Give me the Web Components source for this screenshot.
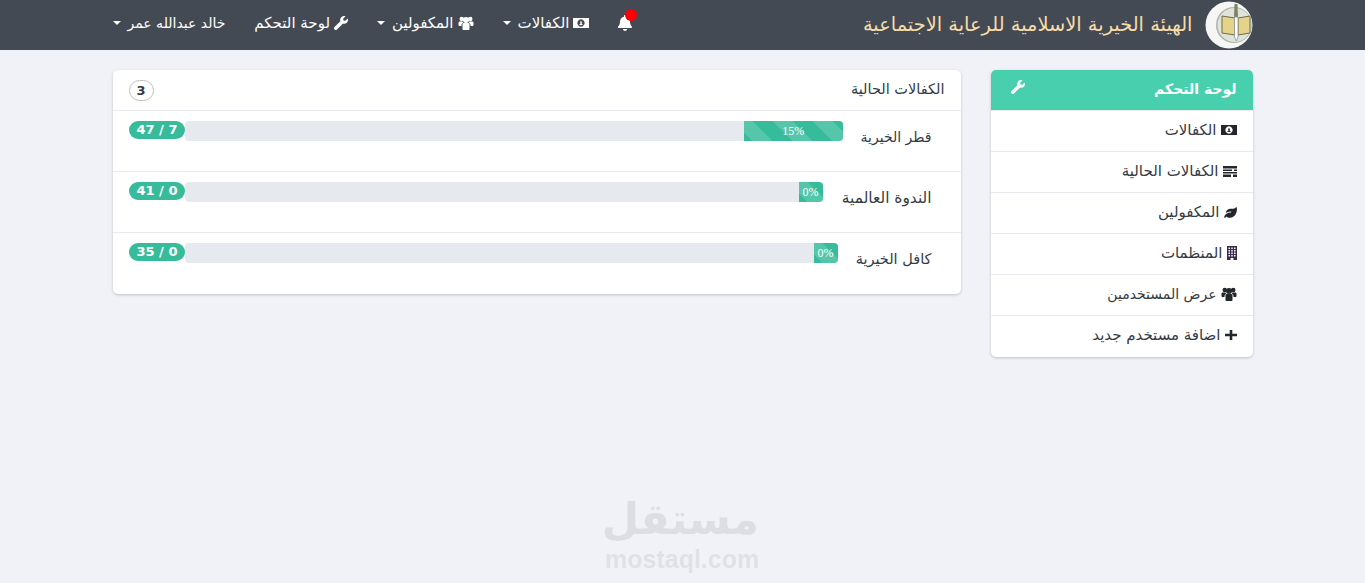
<!DOCTYPE html>
<html lang="ar" dir="rtl">
<head>
<meta charset="utf-8">
<title>لوحة التحكم</title>
<style>
  html, body { margin: 0; height: 100%; }
  body {
    background: #f0f2f7;
    color: #333b45;
    font: 15px/1.5 "DejaVu Sans", "Noto Sans", sans-serif;
    overflow: hidden;
  }
</style>
</head>
<body>
<app-navbar>
  <nav-link icon="bell" badge slot="links"></nav-link>
  <nav-link icon="money" caret slot="links">الكفالات</nav-link>
  <nav-link icon="users" caret slot="links">المكفولين</nav-link>
  <nav-link icon="wrench" slot="links">لوحة التحكم</nav-link>
  <nav-link caret slot="links" style="font-size:14px">خالد عبدالله عمر</nav-link>
</app-navbar>

<page-layout>
  <side-menu slot="side" heading="لوحة التحكم">
    <menu-item icon="money">الكفالات</menu-item>
    <menu-item icon="stream">الكفالات الحالية</menu-item>
    <menu-item icon="leaf">المكفولين</menu-item>
    <menu-item icon="building">المنظمات</menu-item>
    <menu-item icon="users" style="font-size:14px">عرض المستخدمين</menu-item>
    <menu-item icon="plus">اضافة مستخدم جديد</menu-item>
  </side-menu>

  <sponsor-panel slot="main" heading="الكفالات الحالية" count="3">
    <sponsor-row name="قطر الخيرية" done="7" total="47" percent="15" label-width="88" style="--name-size:14px"></sponsor-row>
    <sponsor-row name="الندوة العالمية" done="0" total="41" percent="0" label-width="108" style="--name-size:15.4px"></sponsor-row>
    <sponsor-row name="كافل الخيرية" done="0" total="35" percent="0" label-width="93"></sponsor-row>
  </sponsor-panel>
</page-layout>

<site-mark></site-mark>

<script>
// name: [viewBox, rendered width, rendered height, body]
const ICONS = {
  wrench: ["0 0 512 512", 14, 14, '<path d="M507.73 109.1c-2.24-9.03-13.54-12.09-20.12-5.51l-74.36 74.36-67.88-11.31-11.31-67.88 74.36-74.36c6.62-6.62 3.43-17.9-5.66-20.16-47.38-11.74-99.55.91-136.58 37.93-39.64 39.64-50.55 97.1-34.05 147.2L18.74 402.76c-24.99 24.99-24.99 65.51 0 90.5 24.99 24.99 65.51 24.99 90.5 0l213.21-213.21c50.12 16.71 107.47 5.68 147.37-34.22 37.07-37.07 49.7-89.32 37.91-136.73z"/>'],
  bell: ["0 0 448 512", 14, 16, '<path d="M224 512c35.32 0 63.97-28.65 63.97-64H160.03c0 35.35 28.65 64 63.97 64zm215.39-149.71c-19.32-20.76-55.47-51.99-55.47-154.29 0-77.7-54.48-139.9-127.94-155.16V32c0-17.67-14.32-32-31.98-32s-31.98 14.33-31.98 32v20.84C118.56 68.1 64.08 130.3 64.08 208c0 102.3-36.15 133.53-55.47 154.29-6 6.45-8.66 14.16-8.61 21.71.11 16.4 12.98 32 32.1 32h383.8c19.12 0 32-15.6 32.1-32 .05-7.55-2.61-15.27-8.61-21.71z"/>'],
  plus: ["0 0 12 12", 12, 12, '<path d="M4.7 1h2.6v3.7H12v2.6H7.3V11H4.7V7.3H0V4.7h4.7z"/>'],
  users: ["0 0 30 28", 16, 14, '<circle cx="6.5" cy="6" r="4.5"/><circle cx="23.5" cy="6" r="4.5"/><circle cx="15" cy="8" r="6"/><path d="M8 17c0-2 1.500-3 3-3h8c1.500 0 3 1 3 3v9c0 1-1 2-2 2H10c-1 0-2-1-2-2z"/><path d="M0 14c0-2 1-3 3-3h5c.5 1.500 1 2 1.500 2.500C7.500 14.500 6 16 6 18v2H2c-1 0-2-1-2-2z"/><path d="M30 14c0-2-1-3-3-3h-5c-.5 1.500-1 2-1.500 2.500C22.500 14.500 24 16 24 18v2h4c1 0 2-1 2-2z"/>'],
  money: ["0 0 16 10", 16, 10, '<path fill-rule="evenodd" d="M0 0h16v10H0zM8 1.300a3.600 3.700 0 1 0 .01 0z"/><path d="M7 3.400h1.800v2.500h.7v1H6.500v-1h.9V4.400H7z"/>'],
  stream: ["0 0 14 11", 14, 11, '<path d="M0 0h14v2.500H0zM0 3.500h9v1.500H0zM11 3.500h3v1.500H11zM0 6h14v1.500H0zM0 8.500h8V11H0zM10 8.500h4V11H10z"/>'],
  leaf: ["0 0 13 11", 13, 11, '<path d="M12.800.6c-.2-.5-.8-.5-1-.1-.8 1-2 1.300-3.500 1.300H6.500C4 1.800 2 3.700 1.800 6.100 3 5.200 4.400 4.600 6.800 4.500c.3 0 .5.200.5.500s-.2.500-.5.500C3.200 5.500 1.100 7.500.2 9.700c-.2.500 0 1 .5 1.100.4.100.8 0 1-.5.100-.3.300-.6.500-.9 1.100 1.200 3.100 1.700 5.100 1.200C11 9.900 13.500 5.800 12.800.6z"/>'],
  building: ["0 0 10 14", 10, 14, '<path fill="#3a2a4a" fill-rule="evenodd" d="M0 0h10v14H6.500v-2h-3v2H0zM1.500 1.500v1.500h1.500V1.500zM4.250 1.500v1.500h1.500V1.500zM7 1.500v1.500h1.500V1.500zM1.500 4v1.500h1.500V4zM4.250 4v1.500h1.500V4zM7 4v1.500h1.500V4zM1.500 6.500v1.500h1.500V6.500zM4.250 6.500v1.500h1.500V6.500zM7 6.500v1.500h1.500V6.500zM1.500 9v1.500h1.500V9zM4.250 9v1.500h1.500V9zM7 9v1.500h1.500V9z"/>'],
};

function iconSvg(name) {
  const [box, w, h, body] = ICONS[name];
  return `<svg viewBox="${box}" width="${w}" height="${h}" fill="currentColor" aria-hidden="true">${body}</svg>`;
}

class AppNavbar extends HTMLElement {
  constructor() {
    super();
    this.attachShadow({ mode: "open" });
    this.shadowRoot.innerHTML = `
      <style>
        :host { display: block; background: #434a54; height: 50px; }
        .inner {
          box-sizing: border-box;
          width: 1140px;
          height: 50px;
          margin: 0 auto;
          display: flex;
          align-items: center;
          justify-content: space-between;
        }
        .brand { display: flex; align-items: center; gap: 12px; color: #f8dca8; font-size: 19.4px; white-space: nowrap; }
        .brand svg { display: block; }
        .links { display: flex; align-items: center; gap: 29px; margin-top: -4px; }
      </style>
      <div class="inner">
        <div class="brand">
          <svg width="48" height="48" viewBox="0 0 48 48" aria-hidden="true">
            <circle cx="24" cy="24" r="23.5" fill="#f6f7f4"/>
            <circle cx="29" cy="24" r="18" fill="#aab4aa"/>
            <circle cx="29.500" cy="24" r="17" fill="#dfe3dc"/>
            <path d="M17 15l13 2v17l-13-2z" fill="#e6d38a" stroke="#6f6a48"/>
            <path d="M45 15l-12 2v17l12-2z" fill="#e6d38a" stroke="#6f6a48"/>
            <path d="M29.500 3h3l.5 13h-4z" fill="#7f8468"/>
            <path d="M29.500 16h3.500v20l-1.700 4-1.800-4z" fill="#fff" stroke="#8d9488" stroke-width=".8"/>
          </svg>
          <span>الهيئة الخيرية الاسلامية للرعاية الاجتماعية</span>
        </div>
        <div class="links"><slot name="links"></slot></div>
      </div>`;
  }
}

class NavLink extends HTMLElement {
  connectedCallback() {
    if (this.shadowRoot) return;
    this.attachShadow({ mode: "open" });
    const icon = this.getAttribute("icon");
    this.shadowRoot.innerHTML = `
      <style>
        :host { display: inline-flex; align-items: center; gap: 4px; color: #fff; line-height: 21px; white-space: nowrap; position: relative; }
        svg { display: block; }
        .caret { width: 0; height: 0; margin-inline-start: 3px; border: 4px solid transparent; border-top-color: #fff; border-bottom: 0; }
        .dot { position: absolute; top: -6px; left: 7px; width: 12px; height: 12px; border-radius: 50%; background: #f00; }
      </style>
      ${icon ? iconSvg(icon) : ""}
      <slot></slot>
      ${this.hasAttribute("caret") ? '<span class="caret"></span>' : ""}
      ${this.hasAttribute("badge") ? '<span class="dot"></span>' : ""}`;
  }
}

class PageLayout extends HTMLElement {
  constructor() {
    super();
    this.attachShadow({ mode: "open" });
    this.shadowRoot.innerHTML = `
      <style>
        :host { display: block; }
        .grid {
          width: 1140px;
          margin: 20px auto 0;
          display: grid;
          grid-template-columns: 262px 848px;
          gap: 30px;
          align-items: start;
        }
      </style>
      <div class="grid">
        <slot name="side"></slot>
        <slot name="main"></slot>
      </div>`;
  }
}

class SideMenu extends HTMLElement {
  connectedCallback() {
    if (this.shadowRoot) return;
    this.attachShadow({ mode: "open" });
    this.shadowRoot.innerHTML = `
      <style>
        :host { display: block; background: #fff; border-radius: 5px; box-shadow: 0 1px 3px rgba(0,0,0,.2); overflow: hidden; padding-bottom: 1px; }
        header {
          box-sizing: border-box;
          height: 40px;
          padding: 0 16px 2px 20px;
          display: flex;
          align-items: center;
          justify-content: space-between;
          background: #48cfad;
          color: #fff;
          font-weight: 700;
          font-size: 14px;
        }
        svg { display: block; margin-top: -4px; }
      </style>
      <header><span>${this.getAttribute("heading")}</span>${iconSvg("wrench")}</header>
      <slot></slot>`;
  }
}

class MenuItem extends HTMLElement {
  connectedCallback() {
    if (this.shadowRoot) return;
    this.attachShadow({ mode: "open" });
    this.shadowRoot.innerHTML = `
      <style>
        :host {
          display: flex;
          align-items: center;
          gap: 4px;
          box-sizing: border-box;
          height: 41px;
          padding: 0 16px 2px;
          border-top: 1px solid #e9e9ef;
          color: #333b45;
          white-space: nowrap;
        }
        svg { display: block; color: #23262b; }
      </style>
      ${iconSvg(this.getAttribute("icon"))}
      <span><slot></slot></span>`;
  }
}

class SponsorPanel extends HTMLElement {
  connectedCallback() {
    if (this.shadowRoot) return;
    this.attachShadow({ mode: "open" });
    this.shadowRoot.innerHTML = `
      <style>
        :host { display: block; background: #fff; border-radius: 5px; box-shadow: 0 1px 3px rgba(0,0,0,.2); overflow: hidden; padding-bottom: 1px; }
        header {
          box-sizing: border-box;
          height: 40px;
          padding: 0 16px;
          display: flex;
          align-items: center;
          justify-content: space-between;
        }
        .title { font-size: 14.5px; }
        .count {
          box-sizing: border-box;
          min-width: 25px;
          height: 21px;
          padding: 0 7px;
          border: 1px solid #bcc3bd;
          border-radius: 11px;
          font-weight: 700;
          font-size: 13px;
          line-height: 19px;
          text-align: center;
        }
      </style>
      <header><span class="title">${this.getAttribute("heading")}</span><span class="count">${this.getAttribute("count")}</span></header>
      <slot></slot>`;
  }
}

class SponsorRow extends HTMLElement {
  connectedCallback() {
    if (this.shadowRoot) return;
    this.attachShadow({ mode: "open" });
    const percent = Number(this.getAttribute("percent"));
    this.shadowRoot.innerHTML = `
      <style>
        :host {
          display: flex;
          align-items: flex-start;
          box-sizing: border-box;
          height: 61px;
          padding: 10px 29px 0 16px;
          border-top: 1px solid #e9e9ef;
        }
        .name { width: ${Number(this.getAttribute("label-width")) + 1}px; height: 22px; line-height: 22px; margin-top: 5px; font-size: var(--name-size, 14.5px); white-space: nowrap; }
        .track {
          flex: 1;
          height: 20px;
          display: flex;
          background: #e6e9ed;
          border-radius: 4px;
          overflow: hidden;
        }
        .fill {
          width: ${percent}%;
          min-width: 24px;
          color: #fff;
          font: 12px/20px "Liberation Serif", serif;
          text-align: center;
          background-color: #37bc9b;
          background-image: linear-gradient(45deg, rgba(255,255,255,.15) 25%, transparent 25%, transparent 50%, rgba(255,255,255,.15) 50%, rgba(255,255,255,.15) 75%, transparent 75%, transparent);
          background-size: 40px 40px;
          background-position: -11px 0;
        }
        .badge {
          box-sizing: border-box;
          height: 18px;
          min-width: 56px;
          padding: 0 8px;
          border-radius: 9px;
          background: #37bc9b;
          color: #fff;
          font-weight: 700;
          font-size: 13px;
          line-height: 18px;
          text-align: center;
          white-space: nowrap;
        }
      </style>
      <span class="name">${this.getAttribute("name")}</span>
      <div class="track"><div class="fill">${percent}%</div></div>
      <span class="badge">${this.getAttribute("done")} / ${this.getAttribute("total")}</span>`;
  }
}

class SiteMark extends HTMLElement {
  constructor() {
    super();
    this.attachShadow({ mode: "open" });
    this.shadowRoot.innerHTML = `
      <style>
        :host {
          position: fixed;
          left: 605px;
          top: 494px;
          width: 154px;
          text-align: center;
          color: #dcdee2;
          font-family: "DejaVu Sans", sans-serif;
          font-weight: 700;
          pointer-events: none;
        }
        .ar { display: block; font-size: 43px; line-height: 50px; }
        .en { display: block; font: 700 25px/30px "Liberation Sans", sans-serif; color: #dfe1e4; direction: ltr; white-space: nowrap; }
      </style>
      <span class="ar">مستقل</span>
      <span class="en">mostaql.com</span>`;
  }
}

customElements.define("app-navbar", AppNavbar);
customElements.define("nav-link", NavLink);
customElements.define("page-layout", PageLayout);
customElements.define("side-menu", SideMenu);
customElements.define("menu-item", MenuItem);
customElements.define("sponsor-panel", SponsorPanel);
customElements.define("sponsor-row", SponsorRow);
customElements.define("site-mark", SiteMark);
</script>
</body>
</html>
